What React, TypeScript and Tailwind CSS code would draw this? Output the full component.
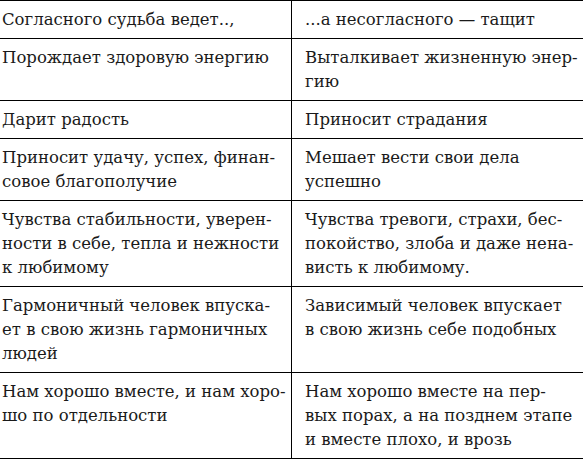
const rows: [string[], string[]][] = [
  [["Согласного судьба ведет..,"], ["...а несогласного — тащит"]],
  [["Порождает здоровую энергию"], ["Выталкивает жизненную энер-", "гию"]],
  [["Дарит радость"], ["Приносит страдания"]],
  [
    ["Приносит удачу, успех, финан-", "совое благополучие"],
    ["Мешает вести свои дела", "успешно"],
  ],
  [
    ["Чувства стабильности, уверен-", "ности в себе, тепла и нежности", "к любимому"],
    ["Чувства тревоги, страхи, бес-", "покойство, злоба и даже нена-", "висть к любимому."],
  ],
  [
    ["Гармоничный человек впуска-", "ет в свою жизнь гармоничных", "людей"],
    ["Зависимый человек впускает", "в свою жизнь себе подобных"],
  ],
  [
    ["Нам хорошо вместе, и нам хоро-", "шо по отдельности"],
    ["Нам хорошо вместе на пер-", "вых порах, а на позднем этапе", "и вместе плохо, и врозь"],
  ],
];

function Lines({ lines }: { lines: string[] }) {
  return (
    <>
      {lines.map((l, i) => (
        <span key={i} className="block whitespace-nowrap">
          {l}
        </span>
      ))}
    </>
  );
}

export default function App() {
  return (
    <div className="w-[583px] overflow-hidden bg-white font-['DejaVu_Serif',serif] text-[16.5px] leading-[24px] text-[#1a1a1a]">
      <div className="border-t border-black">
        {rows.map(([left, right], i) => (
          <div key={i} className="grid grid-cols-[292px_291px] border-b border-black">
            <div className="border-r border-black pt-[7px] pb-[6px] pl-[2px] pr-2">
              <Lines lines={left} />
            </div>
            <div className="pt-[7px] pb-[6px] pl-[13px] pr-2">
              <Lines lines={right} />
            </div>
          </div>
        ))}
      </div>
    </div>
  );
}
